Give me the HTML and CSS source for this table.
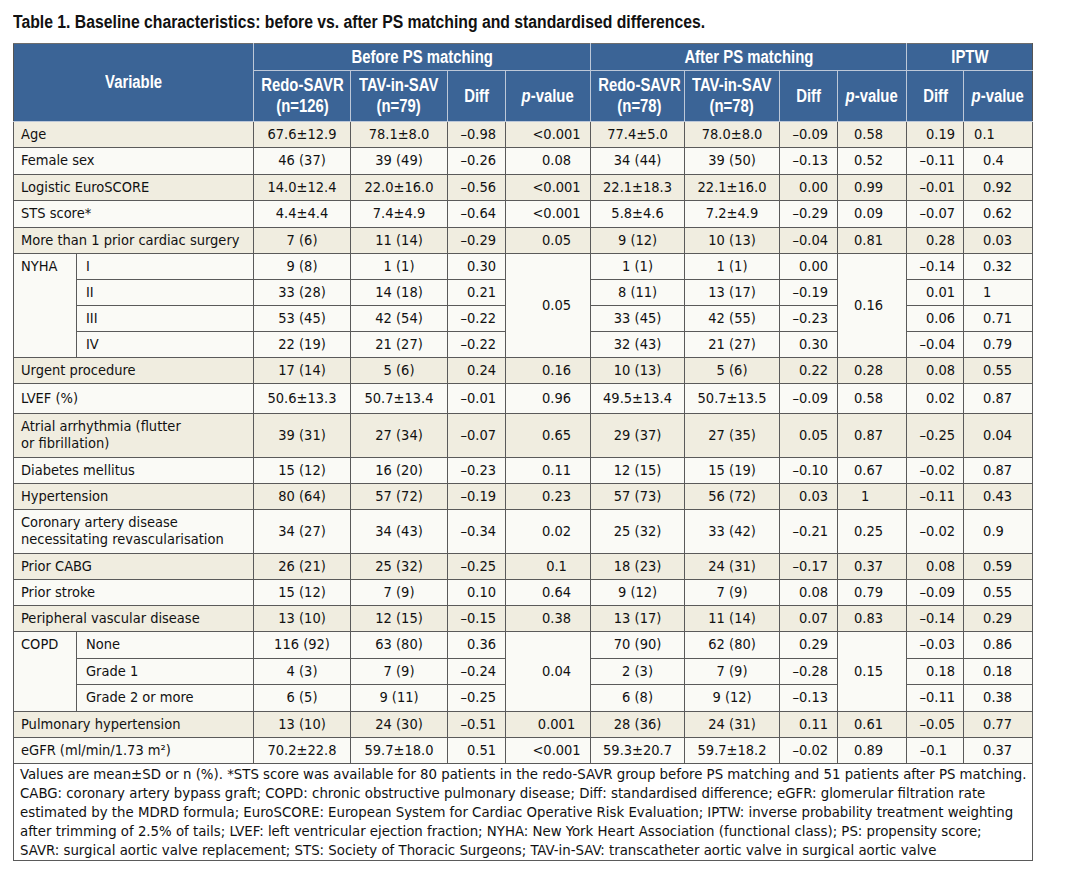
FILE: index.html
```html
<!DOCTYPE html>
<html lang="en">
<head>
<meta charset="utf-8">
<title>Table 1</title>
<link rel="stylesheet" href="styles.css">
</head>
<body>
<h1 class="title"><span class="narrow">Table 1. Baseline characteristics: before vs. after PS matching and standardised differences.</span></h1>
<table class="tbl">
  <colgroup>
    <col class="c-var1"><col class="c-var2">
    <col class="c-redo"><col class="c-tav"><col class="c-diff"><col class="c-p1">
    <col class="c-redo2"><col class="c-tav2"><col class="c-diff"><col class="c-p2">
    <col class="c-idiff"><col class="c-ip">
  </colgroup>
  <thead>
    <tr class="h1">
      <th colspan="2" rowspan="2"><span class="hx">Variable</span></th>
      <th colspan="4"><span class="hx">Before PS matching</span></th>
      <th colspan="4"><span class="hx">After PS matching</span></th>
      <th colspan="2"><span class="hx">IPTW</span></th>
    </tr>
    <tr class="h2">
      <th><span class="hx">Redo-SAVR<br>(n=126)</span></th>
      <th><span class="hx">TAV-in-SAV<br>(n=79)</span></th>
      <th><span class="hx">Diff</span></th>
      <th><span class="hx"><i>p</i>-value</span></th>
      <th><span class="hx">Redo-SAVR<br>(n=78)</span></th>
      <th><span class="hx">TAV-in-SAV<br>(n=78)</span></th>
      <th><span class="hx">Diff</span></th>
      <th><span class="hx"><i>p</i>-value</span></th>
      <th><span class="hx">Diff</span></th>
      <th><span class="hx"><i>p</i>-value</span></th>
    </tr>
  </thead>
  <tbody>
    <tr class="alt"><td class="var" colspan="2">Age</td><td>67.6±12.9</td><td>78.1±8.0</td><td class="d">–0.98</td><td class="p1">&lt;0.001</td><td>77.4±5.0</td><td>78.0±8.0</td><td class="d">–0.09</td><td class="p2">0.58</td><td class="id">0.19</td><td class="ip ipa">0.1</td></tr>
    <tr class="plus"><td class="var" colspan="2">Female sex</td><td>46 (37)</td><td>39 (49)</td><td class="d">–0.26</td><td class="p1">0.08</td><td>34 (44)</td><td>39 (50)</td><td class="d">–0.13</td><td class="p2">0.52</td><td class="id">–0.11</td><td class="ip">0.4</td></tr>
    <tr class="alt"><td class="var" colspan="2">Logistic EuroSCORE</td><td>14.0±12.4</td><td>22.0±16.0</td><td class="d">–0.56</td><td class="p1">&lt;0.001</td><td>22.1±18.3</td><td>22.1±16.0</td><td class="d">0.00</td><td class="p2">0.99</td><td class="id">–0.01</td><td class="ip">0.92</td></tr>
    <tr class="plus"><td class="var" colspan="2">STS score*</td><td>4.4±4.4</td><td>7.4±4.9</td><td class="d">–0.64</td><td class="p1">&lt;0.001</td><td>5.8±4.6</td><td>7.2±4.9</td><td class="d">–0.29</td><td class="p2">0.09</td><td class="id">–0.07</td><td class="ip">0.62</td></tr>
    <tr class="alt"><td class="var" colspan="2">More than 1 prior cardiac surgery</td><td>7 (6)</td><td>11 (14)</td><td class="d">–0.29</td><td class="p1">0.05</td><td>9 (12)</td><td>10 (13)</td><td class="d">–0.04</td><td class="p2">0.81</td><td class="id">0.28</td><td class="ip">0.03</td></tr>
    <tr><td class="var grp" rowspan="4">NYHA</td><td class="sub">I</td><td>9 (8)</td><td>1 (1)</td><td class="d">0.30</td><td class="p1" rowspan="4">0.05</td><td>1 (1)</td><td>1 (1)</td><td class="d">0.00</td><td class="p2" rowspan="4">0.16</td><td class="id">–0.14</td><td class="ip">0.32</td></tr>
    <tr><td class="sub">II</td><td>33 (28)</td><td>14 (18)</td><td class="d">0.21</td><td>8 (11)</td><td>13 (17)</td><td class="d">–0.19</td><td class="id">0.01</td><td class="ip">1</td></tr>
    <tr><td class="sub">III</td><td>53 (45)</td><td>42 (54)</td><td class="d">–0.22</td><td>33 (45)</td><td>42 (55)</td><td class="d">–0.23</td><td class="id">0.06</td><td class="ip">0.71</td></tr>
    <tr><td class="sub">IV</td><td>22 (19)</td><td>21 (27)</td><td class="d">–0.22</td><td>32 (43)</td><td>21 (27)</td><td class="d">0.30</td><td class="id">–0.04</td><td class="ip">0.79</td></tr>
    <tr class="alt"><td class="var" colspan="2">Urgent procedure</td><td>17 (14)</td><td>5 (6)</td><td class="d">0.24</td><td class="p1">0.16</td><td>10 (13)</td><td>5 (6)</td><td class="d">0.22</td><td class="p2">0.28</td><td class="id">0.08</td><td class="ip">0.55</td></tr>
    <tr class="tall"><td class="var" colspan="2">LVEF (%)</td><td>50.6±13.3</td><td>50.7±13.4</td><td class="d">–0.01</td><td class="p1">0.96</td><td>49.5±13.4</td><td>50.7±13.5</td><td class="d">–0.09</td><td class="p2">0.58</td><td class="id">0.02</td><td class="ip">0.87</td></tr>
    <tr class="alt dbl"><td class="var" colspan="2">Atrial arrhythmia (flutter<br>or fibrillation)</td><td>39 (31)</td><td>27 (34)</td><td class="d">–0.07</td><td class="p1">0.65</td><td>29 (37)</td><td>27 (35)</td><td class="d">0.05</td><td class="p2">0.87</td><td class="id">–0.25</td><td class="ip">0.04</td></tr>
    <tr><td class="var" colspan="2">Diabetes mellitus</td><td>15 (12)</td><td>16 (20)</td><td class="d">–0.23</td><td class="p1">0.11</td><td>12 (15)</td><td>15 (19)</td><td class="d">–0.10</td><td class="p2">0.67</td><td class="id">–0.02</td><td class="ip">0.87</td></tr>
    <tr class="alt"><td class="var" colspan="2">Hypertension</td><td>80 (64)</td><td>57 (72)</td><td class="d">–0.19</td><td class="p1">0.23</td><td>57 (73)</td><td>56 (72)</td><td class="d">0.03</td><td class="p2 p2l">1</td><td class="id">–0.11</td><td class="ip">0.43</td></tr>
    <tr class="dbl"><td class="var" colspan="2">Coronary artery disease<br>necessitating revascularisation</td><td>34 (27)</td><td>34 (43)</td><td class="d">–0.34</td><td class="p1">0.02</td><td>25 (32)</td><td>33 (42)</td><td class="d">–0.21</td><td class="p2">0.25</td><td class="id">–0.02</td><td class="ip">0.9</td></tr>
    <tr class="alt"><td class="var" colspan="2">Prior CABG</td><td>26 (21)</td><td>25 (32)</td><td class="d">–0.25</td><td class="p1">0.1</td><td>18 (23)</td><td>24 (31)</td><td class="d">–0.17</td><td class="p2">0.37</td><td class="id">0.08</td><td class="ip">0.59</td></tr>
    <tr><td class="var" colspan="2">Prior stroke</td><td>15 (12)</td><td>7 (9)</td><td class="d">0.10</td><td class="p1">0.64</td><td>9 (12)</td><td>7 (9)</td><td class="d">0.08</td><td class="p2">0.79</td><td class="id">–0.09</td><td class="ip">0.55</td></tr>
    <tr class="alt"><td class="var" colspan="2">Peripheral vascular disease</td><td>13 (10)</td><td>12 (15)</td><td class="d">–0.15</td><td class="p1">0.38</td><td>13 (17)</td><td>11 (14)</td><td class="d">0.07</td><td class="p2">0.83</td><td class="id">–0.14</td><td class="ip">0.29</td></tr>
    <tr class="plus"><td class="var grp" rowspan="3">COPD</td><td class="sub">None</td><td>116 (92)</td><td>63 (80)</td><td class="d">0.36</td><td class="p1" rowspan="3">0.04</td><td>70 (90)</td><td>62 (80)</td><td class="d">0.29</td><td class="p2" rowspan="3">0.15</td><td class="id">–0.03</td><td class="ip">0.86</td></tr>
    <tr><td class="sub">Grade 1</td><td>4 (3)</td><td>7 (9)</td><td class="d">–0.24</td><td>2 (3)</td><td>7 (9)</td><td class="d">–0.28</td><td class="id">0.18</td><td class="ip">0.18</td></tr>
    <tr class="plus"><td class="sub">Grade 2 or more</td><td>6 (5)</td><td>9 (11)</td><td class="d">–0.25</td><td>6 (8)</td><td>9 (12)</td><td class="d">–0.13</td><td class="id">–0.11</td><td class="ip">0.38</td></tr>
    <tr class="alt"><td class="var" colspan="2">Pulmonary hypertension</td><td>13 (10)</td><td>24 (30)</td><td class="d">–0.51</td><td class="p1">0.001</td><td>28 (36)</td><td>24 (31)</td><td class="d">0.11</td><td class="p2">0.61</td><td class="id">–0.05</td><td class="ip">0.77</td></tr>
    <tr><td class="var" colspan="2">eGFR (ml/min/1.73 m²)</td><td>70.2±22.8</td><td>59.7±18.0</td><td class="d">0.51</td><td class="p1">&lt;0.001</td><td>59.3±20.7</td><td>59.7±18.2</td><td class="d">–0.02</td><td class="p2">0.89</td><td class="id id-short">–0.1</td><td class="ip">0.37</td></tr>
  </tbody>
  <tfoot>
    <tr>
      <td class="note" colspan="12">Values are mean±SD or n (%). *STS score was available for 80 patients in the redo-SAVR group before PS matching and 51 patients after PS matching.<br>CABG: coronary artery bypass graft; COPD: chronic obstructive pulmonary disease; Diff: standardised difference; eGFR: glomerular filtration rate<br>estimated by the MDRD formula; EuroSCORE: European System for Cardiac Operative Risk Evaluation; IPTW: inverse probability treatment weighting<br>after trimming of 2.5% of tails; LVEF: left ventricular ejection fraction; NYHA: New York Heart Association (functional class); PS: propensity score;<br>SAVR: surgical aortic valve replacement; STS: Society of Thoracic Surgeons; TAV-in-SAV: transcatheter aortic valve in surgical aortic valve</td>
    </tr>
  </tfoot>
</table>
</body>
</html>
```

FILE: styles.css
```css
html, body {
  margin: 0;
  padding: 0;
  background: #ffffff;
}
body {
  padding: 0 0 0 13px;
  color: #111111;
  font-family: "DejaVu Sans Condensed", "DejaVu Sans", sans-serif;
}
.title {
  margin: 0;
  padding-top: 12px;
  height: 43px;
  box-sizing: border-box;
  font-family: "Liberation Sans", Arial, sans-serif;
  font-size: 17.5px;
  line-height: 20px;
  font-weight: bold;
  color: #111111;
  white-space: nowrap;
}
.narrow {
  display: inline-block;
  transform: scaleX(0.9);
  transform-origin: left center;
}
.tbl {
  border-collapse: collapse;
  table-layout: fixed;
  width: 1019px;
  font-size: 14.5px;
  line-height: 17px;
}
.c-var1 { width: 63px; }
.c-var2 { width: 177px; }
.c-redo { width: 97px; }
.c-tav { width: 97px; }
.c-diff { width: 58px; }
.c-p1 { width: 85px; }
.c-redo2 { width: 94px; }
.c-tav2 { width: 95px; }
.c-p2 { width: 69px; }
.c-idiff { width: 57px; }
.c-ip { width: 69px; }

thead th {
  background: #3b6496;
  color: #ffffff;
  font-family: "Liberation Sans", Arial, sans-serif;
  font-weight: bold;
  font-size: 17.5px;
  line-height: 21px;
  text-align: center;
  vertical-align: middle;
  border: 1px solid #bdc8d8;
  padding: 0;
  white-space: nowrap;
}
.hx {
  display: inline-block;
  transform: scaleX(0.85);
  transform-origin: center center;
}
thead th i {
  font-style: italic;
}
thead tr.h1 th {
  height: 26px;
  border-top: 1px solid #6d6d6d;
}
thead tr.h2 th {
  height: 50px;
}
thead tr th:first-child {
  border-left: 1px solid #555555;
}
thead tr.h1 th:last-child,
thead tr.h2 th:last-child {
  border-right: 1px solid #555555;
}

tbody td {
  border: 1px solid #5a5a5a;
  padding: 4px 3px 4px 3px;
  height: 17px;
  text-align: center;
  vertical-align: middle;
  white-space: nowrap;
  background: #fafaf6;
}
tbody tr.alt td {
  background: #f0ede0;
}
tbody tr.plus td {
  padding-bottom: 5px;
}
tbody tr.tall td {
  padding-top: 6px;
  padding-bottom: 6px;
}
tbody tr.dbl td {
  padding-top: 4px;
  padding-bottom: 5px;
}
tbody td.var {
  text-align: left;
  padding-left: 7px;
}
tbody td.grp {
  vertical-align: top;
}
tbody td.sub {
  text-align: left;
  padding-left: 9px;
}
tbody td.d {
  text-align: right;
  padding-right: 9px;
}
tbody td.p1 {
  padding-left: 20px;
  padding-right: 3px;
}
tbody td.p2 {
  padding-left: 0;
  padding-right: 7px;
}
tbody td.p2l {
  text-align: left;
  padding-left: 23px;
}
tbody td.id {
  text-align: right;
  padding-right: 8px;
}
tbody td.id-short {
  padding-right: 16px;
}
tbody td.ip {
  text-align: left;
  padding-left: 19px;
}
tbody td.ipa {
  padding-left: 10px;
}

tfoot td.note {
  border: 1px solid #5a5a5a;
  background: #ffffff;
  text-align: left;
  padding: 0 6px 1px 6px;
  font-size: 14.8px;
  line-height: 19px;
  white-space: nowrap;
}
```
